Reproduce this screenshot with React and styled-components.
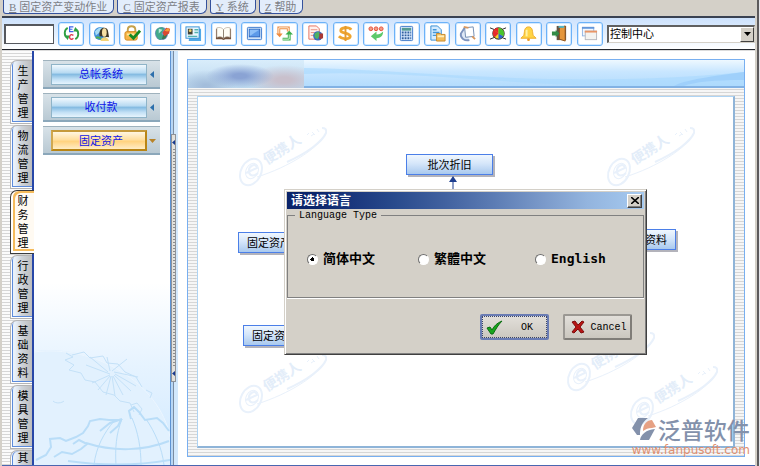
import React, { useState } from 'react';
import styled, { createGlobalStyle, css } from 'styled-components';

const GlobalStyle = createGlobalStyle`
  * {
    box-sizing: border-box;
  }

  body {
    margin: 0;
    background-color: #fff;
    font-family: 'Liberation Sans', 'Noto Sans CJK SC', sans-serif;
    font-size: 11px;
    color: #000;
  }

  button,
  input,
  select {
    margin: 0;
    padding: 0;
    font: inherit;
    color: inherit;
  }
`;

const stripes = css`
  background-color: #f4f4f4;
  background-image: repeating-linear-gradient(to bottom, #f6f6f6 0 2px, #d6d6d6 2px 3px);
`;

/* ---------- window ---------- */

const Desktop = styled.div`
  display: flex;
  height: 100vh;
  overflow: hidden;
`;

const Window = styled.div`
  position: relative;
  flex: 1;
  min-width: 0;
  display: flex;
  flex-direction: column;
  border-left: 2px solid #d4d0c8;
`;

const WindowEdge = styled.div`
  width: 5px;
  background: linear-gradient(to right, #d4d0c8 2px, #5c5a5c 2px 4px, #e4e4ea 4px);
`;

/* ---------- menu ---------- */

const MenuBar = styled.nav`
  display: flex;
  gap: 3px;
  height: 16px;
  padding-left: 1px;
  background-color: #d4d0c8;
`;

const MenuItem = styled.button`
  height: 14px;
  padding: 0 6px 0 5px;
  border: 1px solid #34519c;
  border-top: none;
  border-radius: 0 0 6px 3px;
  background-color: #e3edfb;
  color: #7d7f86;
  line-height: 12px;
  white-space: nowrap;
`;

const HotKey = styled.span`
  margin-right: 3px;
  font-family: 'Liberation Serif', serif;
  text-decoration: underline;
`;

/* ---------- toolbar ---------- */

const Toolbar = styled.div`
  display: flex;
  align-items: center;
  gap: 4px;
  height: 34px;
  padding-left: 2px;
  border-top: 2px solid #3a4252;
  border-bottom: 1px solid #22262e;
  background: linear-gradient(to bottom, #cde2fd, #e4f0fe 55%, #fff);
`;

const CodeInput = styled.input`
  width: 50px;
  height: 20px;
  border: 2px solid #55585e;
  border-right-width: 1px;
  border-bottom-width: 1px;
  background-color: #fff;
  outline: none;
`;

const ToolGroup = styled.div`
  flex: 1;
  display: flex;
  justify-content: space-between;
`;

const ToolButton = styled.button`
  display: flex;
  align-items: center;
  justify-content: center;
  width: 26px;
  height: 24px;
  border: 1px solid #6cb2f8;
  border-radius: 3px;
  background-color: #fff;
  box-shadow: inset 0 0 0 1px #d3e9ff;
`;

const SelectBox = styled.div`
  position: relative;
  width: 148px;
  height: 18px;
  border: 2px solid #606060;
  border-right: 1px solid #d4d0c8;
  border-bottom: 1px solid #d4d0c8;
  background-color: #fff;
`;

const Select = styled.select`
  width: 100%;
  height: 100%;
  padding-left: 1px;
  border: none;
  appearance: none;
  background: transparent;
  line-height: 14px;
  outline: none;
`;

const SelectArrow = styled.span`
  position: absolute;
  top: 0;
  right: 0;
  bottom: 0;
  width: 14px;
  display: flex;
  align-items: center;
  justify-content: center;
  border: 1px solid;
  border-color: #fff #404040 #404040 #fff;
  background-color: #d4d0c8;
  pointer-events: none;
`;

/* ---------- main area ---------- */

const Main = styled.div`
  position: relative;
  flex: 1;
  min-height: 0;
  display: flex;
  border-top: 1px solid #dcdcdc;
  border-bottom: 1px solid #4a66b0;
  overflow: hidden;
`;

const Rail = styled.nav`
  flex: none;
  display: flex;
  flex-direction: column;
  gap: 1px;
  width: 32px;
  padding: 9px 0 0 8px;
  overflow: hidden;
  background-image: linear-gradient(to left, #2747a8 2px, transparent 2px),
    repeating-linear-gradient(to bottom, #fbfbfb 0 2px, #d6d6d6 2px 3px);
`;

const RailTab = styled.button`
  flex: none;
  width: 22px;
  height: 64px;
  padding: 0 3px 0 6px;
  border: 1px solid #b4b4b4;
  border-right: none;
  border-radius: 7px 0 0 0;
  background: linear-gradient(to right, #e9f1fa 4px, #cfd4da 50%, #bdbdbd);
  box-shadow: inset 1px -1px 0 #fff, inset 2px -2px 0 #5b8bdc;
  line-height: 14px;
  text-align: center;
  word-break: break-all;

  &:last-child {
    flex-shrink: 1;
    min-height: 0;
    border-bottom: none;
    box-shadow: inset 1px 0 0 #fff, inset 2px 0 0 #5b8bdc;
  }

  ${({ $active }) =>
    $active &&
    css`
      width: 24px;
      padding-right: 5px;
      border-color: #3c3c3c;
      background: #fffaf2;
      box-shadow: inset 2px 0 0 #fff, inset 0 -2px 0 #fff, inset 4px 2px 0 #f5bb5c,
        inset 0 -4px 0 #f5bb5c;
    `}
`;

const SidePanel = styled.aside`
  position: relative;
  flex: none;
  display: flex;
  flex-direction: column;
  justify-content: space-between;
  width: 137px;
  border-right: 1px solid #5f93d2;
  background: linear-gradient(to bottom, #fff 56%, #e6f3ff 76%, #d0e9ff 100%);
`;

const SectionList = styled.div`
  display: flex;
  flex-direction: column;
  gap: 4px;
  padding: 9px 10px 0 9px;
`;

const Section = styled.div`
  display: flex;
  align-items: center;
  justify-content: space-between;
  height: 29px;
  padding: 0 4px 0 8px;
  border-top: 1px solid #9fb2bd;
  border-bottom: 2px solid #8ba7ba;
  background: linear-gradient(to bottom, #d8e2e8, #b9c9d3);
`;

const SectionButton = styled.button`
  width: 96px;
  height: 21px;
  padding-left: 4px;
  border: 1px solid #8fb4c8;
  background: linear-gradient(to bottom, #f2f9fe, #b9dbf2 40%, #86bce2 50%, #c2e0f5 75%, #e6f4fd);
  color: #0f16e8;
  line-height: 18px;

  ${({ $open }) =>
    $open &&
    css`
      border: 2px solid;
      border-color: #c59a3c #b98514 #b98514 #d0a850;
      background: linear-gradient(to bottom, #fff6e2, #ffdf9f 45%, #ffd37f 55%, #ffedc6);
    `}
`;

const Globe = styled.svg`
  display: block;
  width: 100%;
`;

const Splitter = styled.div`
  flex: none;
  display: flex;
  align-items: center;
  width: 7px;
  background: linear-gradient(to right, #b9d7f5 2px, #7c8ca0 2px 3px, #d3e8fc 3px);
`;

const Grip = styled.div`
  display: flex;
  flex-direction: column;
  justify-content: space-between;
  width: 5px;
  height: 60%;
  padding: 5px 0;
  border: 1px solid #8e9299;
  background-color: #e3e1dc;
  background-image: repeating-linear-gradient(to bottom, #8c8c8c 0 1px, transparent 1px 3px);
  background-size: 2px calc(100% - 28px);
  background-position: center;
  background-repeat: no-repeat;
`;

const Workspace = styled.main`
  flex: 1;
  min-width: 0;
  display: flex;
  padding: 8px 10px 8px 9px;
  background-color: #fff;
`;

const Frame = styled.div`
  flex: 1;
  display: flex;
  flex-direction: column;
  border: 1px solid #78aff0;
  ${stripes}
`;

const Banner = styled.header`
  flex: none;
  display: flex;
  height: 28px;
  border-bottom: 2px solid #82b2e4;
  background: linear-gradient(to bottom, #eef8ff, #c8e6ff 45%, #b4dcfd);
`;

const BannerLogo = styled.div`
  width: 116px;
  height: 28px;
  background: radial-gradient(ellipse 34px 12px at 52px 16px, #8aa3d4 20%, transparent),
    radial-gradient(ellipse 38px 15px at 96px 20px, #c9c0cc 20%, transparent),
    radial-gradient(ellipse 30px 16px at 18px 26px, #a3bddb 10%, transparent),
    linear-gradient(to bottom, #d9edfb, #bcd8ee);
`;

const BannerWave = styled.svg`
  flex: 1;
  min-width: 0;
  height: 26px;
`;

const Page = styled.div`
  position: relative;
  flex: 1;
  margin: 8px 9px;
  overflow: hidden;
  border: 1px solid #aed4f4;
  border-right: 2px solid #8fb4d8;
  border-bottom: 2px solid #8fb4d8;
  background-color: #fff;
`;

const FlowNode = styled.button`
  position: absolute;
  left: ${({ $x }) => $x}px;
  top: ${({ $y }) => $y}px;
  width: 87px;
  height: 21px;
  padding: 0 8px;
  border: 1px solid #4b7fe8;
  background: linear-gradient(to bottom, #f0f7fe, #d5e6fa 45%, #a9c9ee);
  box-shadow: 2px 2px 0 #b3b3bb;
  line-height: 18px;
  text-align: ${({ $align }) => $align || 'center'};
`;

const FlowArrow = styled.svg`
  position: absolute;
  left: 251px;
  top: 79px;
`;

const Watermark = styled.svg`
  position: absolute;
  left: ${({ $x }) => $x}px;
  top: ${({ $y }) => $y}px;
  overflow: visible;
`;

const Brand = styled.a`
  position: absolute;
  right: 5px;
  bottom: 8px;
  display: flex;
  flex-direction: column;
  color: #df8f70;
  font-family: 'DejaVu Sans', sans-serif;
  font-size: 12px;
  line-height: 14px;
  text-decoration: none;
`;

const BrandName = styled.span`
  display: flex;
  align-items: center;
  gap: 2px;
  height: 28px;
  color: #8391ab;
  font-family: 'Noto Sans CJK SC', sans-serif;
  font-size: 23px;
  font-weight: 500;
  line-height: 28px;
`;

/* ---------- dialog ---------- */

const Dialog = styled.form`
  position: absolute;
  left: 282px;
  top: 189px;
  width: 363px;
  padding: 2px;
  border: 1px solid;
  border-color: #d4d0c8 #404040 #404040 #d4d0c8;
  background-color: #d4d0c8;
  box-shadow: inset 1px 1px 0 #fff, inset -1px -1px 0 #808080;
`;

const TitleBar = styled.div`
  display: flex;
  align-items: center;
  justify-content: space-between;
  height: 17px;
  padding: 0 2px 0 4px;
  background: linear-gradient(
    to right,
    #0a246a 0 8%,
    #17337a 16%,
    #284a8c 30%,
    #41619f 44%,
    #5c7cb4 58%,
    #7b9aca 72%,
    #93b4de 84%,
    #a6caf0
  );
  color: #fff;
  font-size: 12px;
  font-weight: 700;
  line-height: 16px;
`;

const CloseButton = styled.button`
  display: flex;
  align-items: center;
  justify-content: center;
  width: 15px;
  height: 14px;
  border: 1px solid;
  border-color: #fff #404040 #404040 #fff;
  background-color: #d4d0c8;
  box-shadow: inset -1px -1px 0 #808080;
`;

const Group = styled.fieldset`
  display: grid;
  grid-template-columns: 111px 117px auto;
  align-items: center;
  height: 88px;
  margin: 1px 0 0;
  padding: 0 0 0 19px;
  border: 1px solid #808080;
  box-shadow: 0 1px 0 #fff;
`;

const Legend = styled.legend`
  margin-left: -12px;
  padding: 0 4px;
  font-family: 'Liberation Mono', monospace;
  font-size: 10px;
  line-height: 11px;
`;

const Choice = styled.label`
  display: flex;
  align-items: center;
  gap: 5px;
  font-family: 'DejaVu Sans Mono', 'Noto Sans CJK SC', monospace;
  font-size: 13px;
  font-weight: 700;
  line-height: 16px;
`;

const Radio = styled.input`
  appearance: none;
  width: 11px;
  height: 11px;
  border: 1px solid;
  border-color: #6e6e6e #fff #fff #6e6e6e;
  border-radius: 50%;
  background-color: #fff;

  &:checked {
    background-image: radial-gradient(circle, #000 0 2px, transparent 2px);
  }
`;

const Actions = styled.div`
  display: flex;
  justify-content: flex-end;
  gap: 14px;
  padding: 16px 12px 12px;
`;

const ActionButton = styled.button`
  display: flex;
  align-items: center;
  width: 69px;
  height: 26px;
  padding: 0 2px 0 6px;
  border: 2px solid;
  border-color: #9b9893 #807d78 #807d78 #9b9893;
  border-radius: 2px;
  background: linear-gradient(to bottom, #e2dfda, #cbc7bf);
  font-family: 'Liberation Mono', monospace;
  font-size: 10px;

  ${({ $default }) =>
    $default &&
    css`
      padding: 0 0 0 4px;
      border-color: #6a7cb4;
      outline: 1px dotted #3c4668;
      outline-offset: -3px;
    `}
`;

const ActionText = styled.span`
  flex: 1;
  padding-left: 4px;
  text-align: center;
`;

/* ---------- icons ---------- */

const icons = {
  语言切换: (
    <>
      <path d="M5 3C1 5 1 11 4 13" fill="none" stroke="#2fa043" strokeWidth="2" />
      <path d="M1 11l6 0-2 5z" fill="#2fa043" />
      <path d="M13 15c4-2 4-8 1-10" fill="none" stroke="#2fa043" strokeWidth="2" />
      <path d="M17 7l-6 0 2-5z" fill="#2fa043" />
      <path d="M11 2H7v5h4M7 4.500h3" fill="none" stroke="#3c63ea" strokeWidth="1.300" />
      <path d="M11 11c-3-2-4 0-4 2s2 3 4 1" fill="none" stroke="#e0304a" strokeWidth="1.400" />
    </>
  ),
  用户: (
    <>
      <circle cx="8" cy="9" r="7" fill="#3f8fdc" />
      <path d="M2 7c3-4 6-5 9-4L7 8l-4 3z" fill="#a8dcf5" />
      <path d="M3 13c3 1 4-1 5 2" stroke="#50b052" strokeWidth="2" fill="none" />
      <path d="M7 12C5 1 16 1 16 7l1 6z" fill="#3d3424" />
      <ellipse cx="12" cy="8" rx="2.500" ry="4.500" fill="#f7dfa4" />
      <path d="M8 17c0-5 8-6 9 0z" fill="#f3d478" />
    </>
  ),
  审核: (
    <>
      <path d="M4 8V5c0-5 8-5 8 0v3" fill="none" stroke="#c5a14b" strokeWidth="2" />
      <rect x="1" y="7" width="13" height="9" rx="2" fill="#f6b545" stroke="#d28a23" />
      <path d="M3 10h8" stroke="#ffe7a0" strokeWidth="2" />
      <path d="M6 10l4 4 7-8" fill="none" stroke="#168a22" strokeWidth="3" />
    </>
  ),
  全球: (
    <>
      <circle cx="8" cy="9" r="7" fill="#7d8fcb" />
      <path d="M2 6c3-5 8-4 9-2L8 9l2 3-3 4c-4-1-6-6-5-10z" fill="#43a98b" />
      <path d="M5 4l4 1-4 4z" fill="#c0e9d9" />
      <path d="M8 15c3 1 6-2 6-6l-4 1z" fill="#3c7b52" />
      <path d="M9 8l4-5 4 1-1 5-5 3z" fill="#db4931" />
      <path d="M11 6l4-3 2 3-3 1z" fill="#f49b3b" />
    </>
  ),
  名片: (
    <>
      <path d="M5 4h12v13H4z" fill="#50a8e7" />
      <rect x="1" y="2" width="14" height="12" fill="#eaf7ff" stroke="#348fd4" />
      <rect x="3" y="4" width="5" height="6" fill="#44453a" />
      <circle cx="5.500" cy="6" r="1.500" fill="#efd16c" />
      <path d="M10 5h4M10 8h4M3 12h10" stroke="#54b4b2" strokeWidth="1.500" />
    </>
  ),
  账簿: (
    <>
      <path d="M1 4h6l2 1 2-1h6v11h-6l-2 1-2-1H1z" fill="#71513c" />
      <path d="M2 3c3-1 6 0 7 2v9c-2-2-5-2-7-1zM16 3c-3-1-6 0-7 2v9c2-2 5-2 7-1z" fill="#fffdf5" stroke="#b4a99a" strokeWidth=".7" />
      <path d="M9 5v9" stroke="#8d8171" />
    </>
  ),
  桌面: (
    <>
      <rect x="1.500" y="2.500" width="15" height="13" rx="1" fill="#cfe4fa" stroke="#3d79cc" />
      <rect x="3.500" y="4.500" width="11" height="8" fill="#5c9ae9" stroke="#2f68c1" />
      <path d="M4 5h10l-9 6H4z" fill="#8ec0f8" />
    </>
  ),
  流程: (
    <>
      <path d="M3 10V3h10v4" fill="none" stroke="#ee8a3f" strokeWidth="3" />
      <path d="M3 10V3h10v4" fill="none" stroke="#fff4e2" strokeWidth="1" />
      <path d="M0 9h7l-3 4z" fill="#ee8a3f" />
      <path d="M7 15h7V9" fill="none" stroke="#3bad4c" strokeWidth="3" />
      <path d="M7 15h7V9" fill="none" stroke="#d8f7d9" strokeWidth="1" />
      <path d="M10 10h8l-4-4z" fill="#3bad4c" />
    </>
  ),
  报表: (
    <>
      <path d="M2 1h8l3 3v11H2z" fill="#fff1ed" stroke="#e46f5c" />
      <path d="M4 5h7M4 8h4M4 11h3" stroke="#eb8e7d" />
      <circle cx="11.500" cy="11.500" r="5" fill="#3a6abf" />
      <path d="M8 9l4-2 2 3-3 5-3-2z" fill="#4fb262" />
      <path d="M13 9h4v5l-4 1z" fill="#a83735" />
    </>
  ),
  收款: (
    <>
      <path d="M15 5C13 2 4 2 4 6c0 3 10 2 10 6 0 3-8 4-12 0" fill="none" stroke="#efa52e" strokeWidth="3" />
      <path d="M9 1v16" stroke="#e59a2e" strokeWidth="2" />
    </>
  ),
  退回: (
    <>
      <circle cx="3" cy="4" r="2" fill="#f29c83" stroke="#e54f38" />
      <circle cx="8.500" cy="4" r="2" fill="#f29c83" stroke="#e54f38" />
      <circle cx="14" cy="4" r="2" fill="#f29c83" stroke="#e54f38" />
      <path d="M16 7c0 5-3 7-7 7v3l-6-5 6-5v3c3 0 5-1 7-3z" fill="#5cc96b" />
    </>
  ),
  计算器: (
    <>
      <rect x="2.500" y="1.500" width="13" height="15" rx="1" fill="#dcecff" stroke="#3e78c8" />
      <rect x="4" y="3" width="10" height="3" fill="#569b93" />
      <path d="M4 8h10M4 11h10M4 14h10" stroke="#315f9f" strokeWidth="2" strokeDasharray="2 1" />
    </>
  ),
  单据: (
    <>
      <path d="M2 1h7l4 4v11H2z" fill="#d5ecff" stroke="#348bd2" />
      <path d="M4 5h4M4 8h7M4 11h5" stroke="#4396d7" strokeWidth="1.500" />
      <path d="M8 9h4l1 1h4v7H8z" fill="#f4bd5b" stroke="#c78a2c" />
      <path d="M9 12h7" stroke="#fff0be" strokeWidth="2" />
    </>
  ),
  附件: (
    <>
      <path d="M6 3L2 9c-1 5 4 8 9 7" fill="#dfe8f5" stroke="#7d93bd" strokeWidth="2" />
      <path d="M6 3l9-1 1 10-9 1z" fill="#fff" stroke="#718bb0" />
      <path d="M5 2l5 1M14 12l3 3" stroke="#d8985f" strokeWidth="2" />
    </>
  ),
  图表: (
    <>
      <path d="M0 3l5 2M17 3l-5 2M0 15l5-2M17 15l-5-2" stroke="#222" />
      <circle cx="9" cy="9" r="6" fill="#f1d628" stroke="#111" />
      <path d="M9 9L4 5a6 6 0 0 1 5-2z" fill="#e7292b" />
      <path d="M9 9L4 5a6 6 0 0 0 1 8z" fill="#e7292b" />
      <path d="M9 9V3a6 6 0 0 1 5 9z" fill="#48c52c" />
      <path d="M9 9l5 3a6 6 0 0 1-5 3z" fill="#2563d4" />
    </>
  ),
  提醒: (
    <>
      <path d="M9 2c-5 0-4 6-5 9l-3 3h16l-3-3c-1-3 0-9-5-9z" fill="#ffd445" stroke="#edaa25" />
      <path d="M7 5v7" stroke="#fff2a7" strokeWidth="2" />
      <circle cx="9" cy="15.500" r="1.500" fill="#ef9c20" />
    </>
  ),
  退出: (
    <>
      <path d="M6 1h10v15H6z" fill="#655241" />
      <path d="M9 3l6-2v16l-6-2z" fill="#e5963b" stroke="#92561e" />
      <path d="M8 2h6" stroke="#52b6c6" strokeWidth="2" />
      <path d="M1 7h4V5l4 4-4 4v-2H1z" fill="#338b46" />
    </>
  ),
  窗口: (
    <>
      <rect x="1.500" y="2.500" width="12" height="9" fill="#f3f8ff" stroke="#90b5e4" />
      <path d="M1 3h13" stroke="#6497da" strokeWidth="2" />
      <rect x="4.500" y="6.500" width="12" height="9" fill="#f4f3f0" stroke="#b7b8bd" />
      <path d="M4 7h13" stroke="#e99566" strokeWidth="2" />
    </>
  ),
};

const ToolIcon = ({ name }) => (
  <svg width="17" height="17" viewBox="0 0 18 18" aria-hidden="true">
    {icons[name]}
  </svg>
);

const SectionArrow = ({ open }) => (
  <svg width="7" height="8" viewBox="0 0 7 8" aria-hidden="true">
    {open ? (
      <path d="M0 3h7L3.500 7z" fill="#b88328" />
    ) : (
      <path d="M5 1v7L1 4.500z" fill="#2d6fac" />
    )}
  </svg>
);

const GripArrow = () => (
  <svg width="3" height="5" viewBox="0 0 3 5" aria-hidden="true">
    <path d="M3 0v5L0 2.500z" fill="#17398f" />
  </svg>
);

const Mark = ({ x, y }) => (
  <Watermark $x={x} $y={y} width="94" height="64" viewBox="0 0 94 64" aria-hidden="true">
    <g fill="none" stroke="#e9f1fb">
      <ellipse cx="14" cy="48" rx="10" ry="14" transform="rotate(28 14 48)" strokeWidth="2" />
      <ellipse cx="15" cy="47" rx="6" ry="8" transform="rotate(28 15 47)" />
      <path d="M9 49l11-5c-1-6-9-2-8 4 1 5 6 4 9 1" strokeWidth="2" />
      <path d="M20 53C52 43 82 24 89 9" />
      <path d="M50 38C70 29 85 18 89 9c1-4-1-5-4-5" strokeWidth="2" />
      <path d="M70 11l2-2M75 8l3 3M80 5l2 3M74 12l3-2" />
    </g>
    <text
      x="30"
      y="41"
      transform="rotate(-33 30 41)"
      fill="#e3edf9"
      fontFamily="Noto Sans CJK SC, sans-serif"
      fontSize="14"
      fontWeight="700"
    >
      便携人
    </text>
  </Watermark>
);

const GlobeArt = () => (
  <Globe viewBox="0 0 136 116" aria-hidden="true">
    <path d="M0 2C60-6 128 36 136 90v26H0z" fill="#e2f1fe" />
    <path d="M0 3C60-5 126 34 136 88" fill="none" stroke="#ecf6ff" />
    <g fill="none" stroke="#c4e1f8" strokeWidth="1">
      <path d="M32 4l7 4-8 3 9 5-5 5 12 3 4 7 10 2 8 10 11 3 6 6 10 2 4 9M38 6l12-3 6 6 13-2 4 7 11 1 7 8 11 5 6 10" />
      <path d="M76 25L52 16M76 26l-18 8M76 27l-12 14M77 27l-5 19M78 27l3 20M79 27l10 19M80 26l17 16M81 25l21 12M80 23l24 5M78 22l15-12M76 22l-3-14M74 23l-18-15" />
      <path d="M19 52c3 3 9 2 11 0M97 56l6-2 5 6-3 6M112 41l6 3-2 5" />
    </g>
    <g fill="none" stroke="#b9ddf8">
      <path
        d="M2 111l10-5 5-8-1-8 10-1 6 3 10-4 7-4 5-7 2-5 10-2 9 1 12 0-3 6-8 7 M20 108l8-5 10 2 9-5 6-5-8-4-6 4 M66 82l10-8 12-4 M97 70l-2-8 5-4 5 5 6 8 12-2 6 5 6 8"
        strokeWidth="2"
      />
      <path d="M80 72c-10 12-18 26-20 44M88 70c-6 15-7 30-6 46M98 69c6 14 9 30 9 47M112 70c9 13 16 29 18 46" />
      <path d="M52 94c28 9 58 8 83-2M34 112c35 5 68 5 102-1" strokeWidth="2" />
    </g>
  </Globe>
);

/* ---------- data ---------- */

const menus = [
  { key: 'B', label: '固定资产变动作业' },
  { key: 'C', label: '固定资产报表' },
  { key: 'Y', label: '系统' },
  { key: 'Z', label: '帮助' },
];

const railTabs = ['生产管理', '物流管理', '财务管理', '行政管理', '基础资料', '模具管理', '其'];

const sections = ['总帐系统', '收付款', '固定资产'];

const languages = ['简体中文', '繁體中文', 'English'];

const marks = [
  { x: 39, y: 27 },
  { x: 407, y: 27 },
  { x: 39, y: 254 },
  { x: 367, y: 232 },
  { x: 430, y: 266 },
];

const App = () => {
  const [tab, setTab] = useState('财务管理');
  const [section, setSection] = useState('固定资产');
  const [language, setLanguage] = useState('简体中文');

  return (
    <>
      <GlobalStyle />
      <Desktop>
        <Window>
          <MenuBar>
            {menus.map(({ key, label }) => (
              <MenuItem key={key} type="button">
                <HotKey>{key}</HotKey>
                {label}
              </MenuItem>
            ))}
          </MenuBar>

          <Toolbar>
            <CodeInput type="text" aria-label="代码" />
            <ToolGroup>
              {Object.keys(icons).map((name) => (
                <ToolButton key={name} type="button" aria-label={name}>
                  <ToolIcon name={name} />
                </ToolButton>
              ))}
            </ToolGroup>
            <SelectBox>
              <Select aria-label="导航">
                <option>控制中心</option>
              </Select>
              <SelectArrow>
                <svg width="7" height="4" viewBox="0 0 7 4" aria-hidden="true">
                  <path d="M0 0h7L3.500 4z" />
                </svg>
              </SelectArrow>
            </SelectBox>
          </Toolbar>

          <Main>
            <Rail>
              {railTabs.map((name) => (
                <RailTab key={name} type="button" $active={name === tab} onClick={() => setTab(name)}>
                  {name}
                </RailTab>
              ))}
            </Rail>

            <SidePanel>
              <SectionList>
                {sections.map((name) => (
                  <Section key={name}>
                    <SectionButton
                      type="button"
                      $open={name === section}
                      onClick={() => setSection(name)}
                    >
                      {name}
                    </SectionButton>
                    <SectionArrow open={name === section} />
                  </Section>
                ))}
              </SectionList>
              <GlobeArt />
            </SidePanel>

            <Splitter>
              <Grip>
                <GripArrow />
                <GripArrow />
              </Grip>
            </Splitter>

            <Workspace>
              <Frame>
                <Banner>
                  <BannerLogo />
                  <BannerWave viewBox="0 0 440 26" preserveAspectRatio="none" aria-hidden="true">
                    <path d="M0 8c120 2 260 22 440 4v14H300C200 24 100 10 0 14z" fill="#a9d8fd" opacity=".6" />
                    <path d="M370 26c10-6 40-10 70-14v8c-30 0-50 2-60 6z" fill="#9fd0fb" />
                  </BannerWave>
                </Banner>
                <Page>
                  {marks.map(({ x, y }) => (
                    <Mark key={`${x}-${y}`} x={x} y={y} />
                  ))}
                  <FlowNode type="button" $x={208} $y={57}>
                    批次折旧
                  </FlowNode>
                  <FlowNode type="button" $x={40} $y={135} $align="left">
                    固定资产
                  </FlowNode>
                  <FlowNode type="button" $x={45} $y={228} $align="left">
                    固定资产
                  </FlowNode>
                  <FlowNode type="button" $x={391} $y={132} $align="right">
                    资料
                  </FlowNode>
                  <FlowArrow width="8" height="16" viewBox="0 0 8 16" aria-hidden="true">
                    <path d="M0 6h8L4 0z" fill="#1f3f8f" />
                    <path d="M4 5v11" stroke="#1f3f8f" />
                  </FlowArrow>
                </Page>
              </Frame>
            </Workspace>

            <Brand href="#fanpusoft">
              <BrandName>
                <svg width="24" height="23" viewBox="0 0 24 23" aria-hidden="true">
                  <path d="M6 0h10C9 5 8 11 8 17H5L0 10z" fill="#8391ab" />
                  <path d="M11 13c0-7 4-11 9-11l4 7-4 1c-4 0-6 1-9 3z" fill="#e6a184" />
                  <path d="M8 22c1-6 6-10 15-11l-6 11z" fill="#8391ab" />
                </svg>
                泛普软件
              </BrandName>
              www.fanpusoft.com
            </Brand>
          </Main>

          <Dialog onSubmit={(e) => e.preventDefault()}>
            <TitleBar>
              请选择语言
              <CloseButton type="button" aria-label="关闭">
                <svg width="8" height="7" viewBox="0 0 8 7" aria-hidden="true">
                  <path d="M0 0l8 7M8 0L0 7" stroke="#000" strokeWidth="1.600" />
                </svg>
              </CloseButton>
            </TitleBar>
            <Group>
              <Legend>Language Type</Legend>
              {languages.map((name) => (
                <Choice key={name}>
                  <Radio
                    type="radio"
                    name="language"
                    checked={name === language}
                    onChange={() => setLanguage(name)}
                  />
                  {name}
                </Choice>
              ))}
            </Group>
            <Actions>
              <ActionButton type="submit" $default>
                <svg width="17" height="15" viewBox="0 0 17 15" aria-hidden="true">
                  <path d="M1 8l3-1 2 3c2-4 5-7 10-9-4 4-6 8-9 13H5z" fill="#18a51c" stroke="#0b6d12" />
                </svg>
                <ActionText>OK</ActionText>
              </ActionButton>
              <ActionButton type="button">
                <svg width="14" height="14" viewBox="0 0 14 14" aria-hidden="true">
                  <path d="M1 2l3-1 3 4 4-4 2 1-4 5 4 5-3 1-3-4-4 4-2-1 4-5z" fill="#b81414" stroke="#7d0c0c" />
                </svg>
                <ActionText>Cancel</ActionText>
              </ActionButton>
            </Actions>
          </Dialog>
        </Window>
        <WindowEdge />
      </Desktop>
    </>
  );
};

export default App;
